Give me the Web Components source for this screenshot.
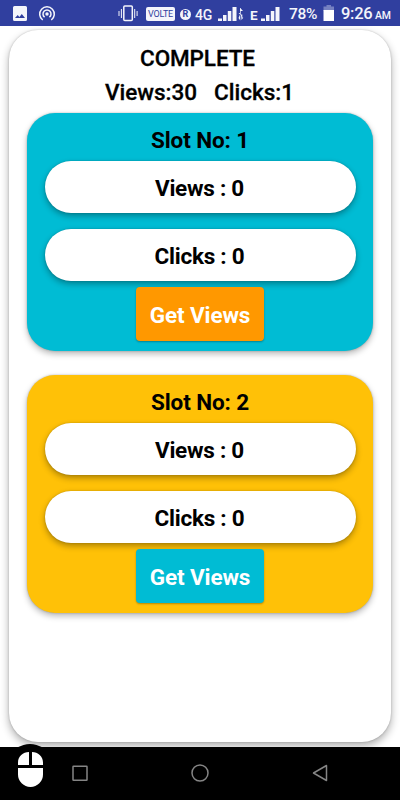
<!DOCTYPE html>
<html lang="en">
<head>
<meta charset="utf-8">
<title>Views</title>
<style>
  body { margin: 0; font-family: Roboto, 'Noto Sans', sans-serif; }
</style>
</head>
<body>
<phone-screen>
  <status-bar slot="top"></status-bar>
  <view-board>
    <span slot="title">COMPLETE</span>
    <span slot="views">Views:30</span>
    <span slot="clicks">Clicks:1</span>
    <slot-card color="#00bcd4" button="#ff9800">
      <span slot="name">Slot No: 1</span>
      <stat-pill>Views : 0</stat-pill>
      <stat-pill>Clicks : 0</stat-pill>
      <span slot="action">Get Views</span>
    </slot-card>
    <slot-card color="#ffc107" button="#00bcd4">
      <span slot="name">Slot No: 2</span>
      <stat-pill>Views : 0</stat-pill>
      <stat-pill>Clicks : 0</stat-pill>
      <span slot="action">Get Views</span>
    </slot-card>
  </view-board>
  <nav-bar slot="bottom"></nav-bar>
</phone-screen>

<script>
function define(name, html, setup) {
  const template = document.createElement('template');
  template.innerHTML = html;
  customElements.define(name, class extends HTMLElement {
    constructor() {
      super();
      this.attachShadow({ mode: 'open' }).appendChild(template.content.cloneNode(true));
    }
    connectedCallback() { if (setup) setup(this); }
  });
}

define('phone-screen', `
  <style>
    :host { display: flex; flex-direction: column; width: 400px; height: 800px; overflow: hidden; background: #fff; }
    main { flex: 1; box-sizing: border-box; padding: 4.400px 9px 5px; display: flex; overflow: hidden; }
  </style>
  <slot name="top"></slot>
  <main><slot></slot></main>
  <slot name="bottom"></slot>
`);

define('status-bar', `
  <style>
    :host { display: flex; align-items: center; box-sizing: border-box; flex: none; height: 26px; padding-left: 12px; background: #303f9f; color: #f4f5fb; }
    svg { display: block; flex: none; }
    span { flex: none; white-space: nowrap; line-height: 20px; }
    .volte { box-sizing: border-box; width: 29px; height: 14px; margin: 1px 0 0 8px; border-radius: 2px; background: #f4f5fb; color: #303f9f; font-size: 9px; letter-spacing: -.2px; line-height: 15px; text-align: center; }
    .reg { box-sizing: border-box; width: 11px; height: 11px; margin: 2px 0 0 5px; border-radius: 50%; background: #f4f5fb; color: #303f9f; font-size: 9px; font-weight: 700; line-height: 11px; text-align: center; }
    .net { width: 17px; margin: 4px 0 0 4px; font-size: 14px; font-weight: 500; letter-spacing: -.3px; }
    .edge { width: 9px; margin: 4px 0 0 5px; font-size: 13.500px; font-weight: 700; }
    .charge { width: 30px; margin: 2px 0 0 8px; font-size: 15.500px; font-weight: 500; letter-spacing: -.3px; }
    .time { width: 31px; margin: 2px 0 0 6px; font-size: 16.500px; font-weight: 500; letter-spacing: -.3px; }
    .ampm { margin: 5px 0 0 3px; font-size: 10.500px; font-weight: 500; letter-spacing: -.2px; }
  </style>
  <svg width="16" height="26" viewBox="0 0 16 26"><path fill="#f4f5fb" fill-rule="evenodd" d="M2.500 6h11a1.500 1.500 0 0 1 1.500 1.500v12a1.500 1.500 0 0 1-1.500 1.500h-11a1.500 1.500 0 0 1-1.500-1.500v-12a1.500 1.500 0 0 1 1.500-1.500zM3 18h10l-3.200-4-2.400 3-1.700-2z"/></svg>
  <svg style="margin-left:10px" width="18" height="26" viewBox="0 0 18 26" fill="none" stroke="#f4f5fb" stroke-width="1.500"><circle cx="9" cy="14" r="1.700" fill="#f4f5fb" stroke="none"/><path d="M6.600 17.200a4 4 0 1 1 4.800 0M4.700 20a7.300 7.300 0 1 1 8.600 0"/></svg>
  <svg style="margin-left:62px" width="20" height="26" viewBox="0 0 20 26" fill="none" stroke="#f4f5fb"><rect x="5.800" y="6" width="8.500" height="14.500" rx="1" stroke-width="1.500"/><path d="M3.400 9v9M1 11v5M16.700 9v9M19.100 11v5"/></svg>
  <span class="volte">VOLTE</span>
  <span class="reg">R</span>
  <span class="net">4G</span>
  <svg style="margin-left:6px" width="27" height="26" viewBox="0 0 27 26" fill="#f4f5fb"><path d="M0 18.500h4v2.500h-4zM5 15h3.500v6h-3.500zM9.800 11h3.500v10h-3.500zM14.500 7h4v14h-4zM22 8v5h-1.500l2.200 2V8zM22.700 8.500l2.300 2.500h-2.300zM22.300 14v6.500l-1.800-2.500zM22.900 14.500h1.400v3h1l-1.700 2.500z"/></svg>
  <span class="edge">E</span>
  <svg style="margin-left:2px" width="20" height="26" viewBox="0 0 20 26" fill="#f4f5fb"><path d="M0 18.500h4v2.500h-4zM5 15h3.500v6h-3.500zM9.800 11h3.500v10h-3.500zM14.500 7h4v14h-4z"/></svg>
  <span class="charge">78%</span>
  <svg style="margin-left:4px" width="12" height="26" viewBox="0 0 12 26"><path fill="#7681c1" d="M3.500 5h4.500v1.500h3V11H.5V6.500h3z"/><path fill="#fff" d="M.5 10H11v11H.5z"/></svg>
  <span class="time">9:26</span>
  <span class="ampm">AM</span>
`);

define('view-board', `
  <style>
    :host { display: flex; flex-direction: column; align-items: center; box-sizing: border-box; width: 382px; height: 712px; padding: 10px 18px 0; border-radius: 29px; background: #fff; box-shadow: 0 0 2px rgba(0,0,0,.22), 0 4px 8px rgba(0,0,0,.32); font-size: 22.500px; letter-spacing: -.12px; font-weight: 700; color: #000; }
    .line { height: 34px; line-height: 36px; white-space: nowrap; font-weight: 500; -webkit-text-stroke: .3px; }
    .title { margin-right: 5px; }
    .totals { display: flex; gap: 17px; margin-right: 1px; letter-spacing: 0; }
    .cards { display: flex; flex-direction: column; gap: 24px; padding-top: 5px; width: 100%; }
  </style>
  <div class="line title"><slot name="title"></slot></div>
  <div class="line totals"><slot name="views"></slot><slot name="clicks"></slot></div>
  <div class="cards"><slot></slot></div>
`);

define('slot-card', `
  <style>
    :host { display: flex; flex-direction: column; align-items: center; box-sizing: border-box; height: 238px; padding: 9px 17.500px 0; border-radius: 28px; background: var(--card); box-shadow: 0 0 2px rgba(0,0,0,.25), 0 3px 6px rgba(0,0,0,.28); }
    .name { height: 34px; line-height: 36px; margin-bottom: 4.700px; }
    .pills { display: flex; flex-direction: column; gap: 15.500px; width: 100%; }
    button { width: 128px; height: 53.500px; margin-top: 6.500px; padding: 2px 0 0; border: 0; border-radius: 4px; background: var(--action); color: #fff; font: inherit; letter-spacing: inherit; box-shadow: 0 1px 2px rgba(0,0,0,.3); }
  </style>
  <div class="name"><slot name="name"></slot></div>
  <div class="pills"><slot></slot></div>
  <button><slot name="action"></slot></button>
`, el => {
  el.style.setProperty('--card', el.getAttribute('color'));
  el.style.setProperty('--action', el.getAttribute('button'));
});

define('stat-pill', `
  <style>
    :host { display: block; height: 52px; line-height: 55px; border-radius: 26px; background: #fff; text-align: center; text-indent: -1px; letter-spacing: -.25px; box-shadow: 0 0 2px rgba(0,0,0,.2), 0 3px 6px rgba(0,0,0,.32); }
  </style>
  <slot></slot>
`);

define('nav-bar', `
  <style>
    :host { position: relative; display: flex; align-items: center; justify-content: space-between; box-sizing: border-box; flex: none; height: 53px; padding: 0 70px 1px; background: #000; }
    svg { display: block; }
    .mouse { position: absolute; left: 13px; top: -3px; }
  </style>
  <svg class="mouse" width="34" height="46" viewBox="0 0 34 46"><path d="M4 4Q17-4 30 4v20H4z"/><path fill="#fff" d="M16 8v13H5v-2.500C5 12.500 10 8 16 8zM19 8c6 0 11 4.500 11 10.500V21H19zM5 24h25v6.500a12.500 12.500 0 0 1-25 0z"/></svg>
  <svg width="20" height="20" viewBox="0 0 20 20" fill="none" stroke="#858585" stroke-width="1.500"><rect x="3" y="3.200" width="14" height="14" rx=".5"/></svg>
  <svg width="20" height="20" viewBox="0 0 20 20" fill="none" stroke="#858585" stroke-width="1.500"><circle cx="10" cy="10" r="8"/></svg>
  <svg width="20" height="20" viewBox="0 0 20 20" fill="none" stroke="#858585" stroke-width="1.500" stroke-linejoin="round"><path d="M16.500 2.500v15L3.500 10z"/></svg>
`);
</script>
</body>
</html>
